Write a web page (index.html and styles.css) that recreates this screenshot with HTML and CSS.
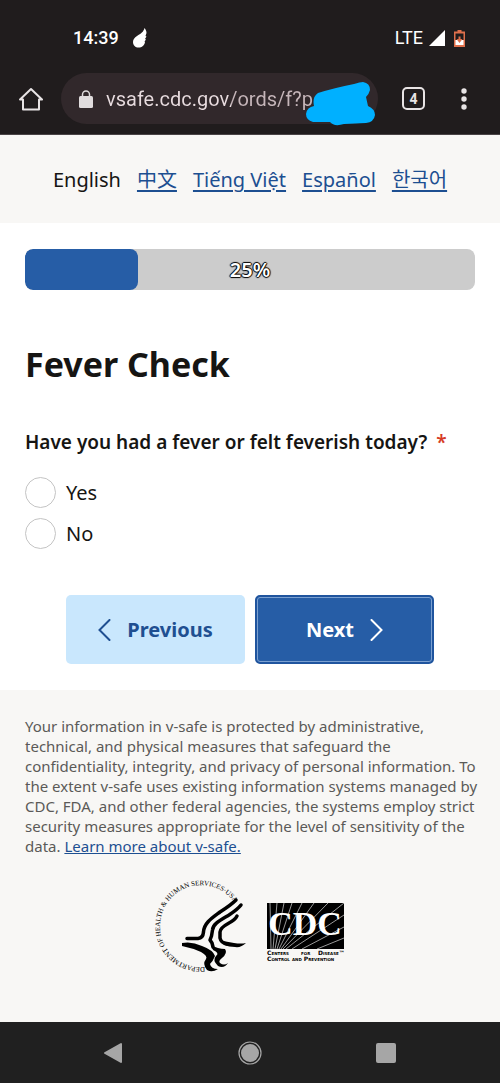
FILE: index.html
```html
<!DOCTYPE html>
<html lang="en">
<head>
<meta charset="UTF-8" />
<meta name="viewport" content="width=device-width, initial-scale=1" />
<title>Fever Check</title>
<link rel="stylesheet" href="styles.css">
</head>
<body>

<div class="status-bar">
  <span class="clock">14:39</span>
  <svg class="flame" width="14" height="20" viewBox="0 0 14 20" aria-hidden="true">
    <path fill="#fff" d="M11.500 0 C10.500 4 8 5.500 4 8 C1.500 9.500 0 11.500 0 14 C0 17.500 2.500 19.500 5.500 19.500 C9 19.500 11.500 17.500 12 14 L11.500 13.500 L13 11.500 L12 11 L13.500 8.500 L12.500 8 L13.500 5 C13.500 3 12.500 1 11.500 0 Z"/>
  </svg>
  <span class="network">LTE</span>
  <svg width="16" height="16" viewBox="0 0 16 16" aria-hidden="true"><path fill="#fff" d="M16 0 V16 H0 Z"/></svg>
  <svg class="battery" width="11" height="17" viewBox="0 0 11 17" aria-hidden="true">
    <path fill="#e0704c" d="M3.500 0 H7.500 V1.500 H11 V17 H0 V1.500 H3.500 Z"/>
    <path fill="#201c1d" d="M1.500 3.500 H9.500 V10 H1.500 Z"/>
    <path fill="#fff" d="M1.500 10 H9.500 V15 H1.500 Z"/>
    <path fill="#e0704c" d="M4.500 6.500 H6.500 V9 H8.500 L5.500 13 L2.500 9 H4.500 Z"/>
  </svg>
</div>

<div class="toolbar">
  <button class="icon-btn" aria-label="Home">
    <svg width="24" height="24" viewBox="0 0 24 24" fill="none" stroke="#e8e4e5" stroke-width="2" stroke-linejoin="round">
      <path d="M1 12.500 L12 2 L23 12.500 H20 V22.500 H4 V12.500 Z"/>
    </svg>
  </button>
  <div class="address">
    <svg width="14" height="18" viewBox="0 0 14 18" aria-hidden="true">
      <rect x="0" y="6" width="14" height="12" rx="1.500" fill="#e0dcdd"/>
      <path d="M3.500 7 V4.500 A3.500 3.500 0 0 1 10.500 4.500 V7" fill="none" stroke="#e0dcdd" stroke-width="1.500"/>
    </svg>
    <input type="text" aria-label="Address" value="vsafe.cdc.gov/ords/f?p" />
    <svg class="scribble" width="70" height="44" viewBox="0 0 70 44" aria-hidden="true">
      <path fill="#00b0ff" d="M12 11 Q28 6 48 2 Q54 0 57 0 Q64 1 64 8 Q63 12 60 15 L62 24 Q69 27 69 33 Q68 40 60 41 L38 42 Q28 45 24 40 L7 40 Q0 38 0 32 Q1 25 8 24 Q6 15 12 11 Z"/>
    </svg>
  </div>
  <button class="tabs" aria-label="4 open tabs">4</button>
  <button class="icon-btn" aria-label="More options">
    <svg width="6" height="22" viewBox="0 0 6 22" fill="#e8e4e5"><circle cx="3" cy="3" r="2.700"/><circle cx="3" cy="11" r="2.700"/><circle cx="3" cy="19" r="2.700"/></svg>
  </button>
</div>

<nav class="languages">
  <span>English</span>
  <a href="#" lang="zh">中文</a>
  <a href="#" lang="vi">Tiếng Việt</a>
  <a href="#" lang="es">Español</a>
  <a href="#" lang="ko">한국어</a>
</nav>

<main>
  <div class="progress" role="progressbar" aria-label="Survey progress" aria-valuenow="25" aria-valuemin="0" aria-valuemax="100">
    <div class="progress-fill" style="width: 25%"></div>
    <span class="progress-text">25%</span>
  </div>

  <h1>Fever Check</h1>

  <form>
    <fieldset>
      <legend>Have you had a fever or felt feverish today? <span class="required">*</span></legend>
      <div class="option">
        <input type="radio" name="fever" id="feverYes" />
        <label for="feverYes">Yes</label>
      </div>
      <div class="option">
        <input type="radio" name="fever" id="feverNo" />
        <label for="feverNo">No</label>
      </div>
    </fieldset>

    <div class="actions">
      <button type="button" class="btn btn-previous">
        <svg width="13" height="22" viewBox="0 0 13 22" fill="none" stroke="currentColor" stroke-width="2" stroke-linecap="round"><path d="M11.500 1 L1.500 11 L11.500 21"/></svg>
        Previous
      </button>
      <button type="button" class="btn btn-next">
        Next
        <svg width="13" height="22" viewBox="0 0 13 22" fill="none" stroke="currentColor" stroke-width="2" stroke-linecap="round"><path d="M1.500 1 L11.500 11 L1.500 21"/></svg>
      </button>
    </div>
  </form>
</main>

<footer>
  <p>Your information in v-safe is protected by administrative, technical, and physical measures that safeguard the confidentiality, integrity, and privacy of personal information. To the extent v-safe uses existing information systems managed by CDC, FDA, and other federal agencies, the systems employ strict security measures appropriate for the level of sensitivity of the data. <a href="#">Learn more about v-safe.</a></p>
  <div class="logos">
    <svg class="seal" width="92" height="96" viewBox="9 8 92 96" role="img" aria-label="Department of Health and Human Services">
      <path id="sealArc" fill="none" d="M60 97 A41 41 0 1 1 97 56"/>
      <text class="seal-text"><textPath href="#sealArc">DEPARTMENT OF HEALTH &amp; HUMAN SERVICES·USA</textPath></text>
      <g fill="none" stroke="#000" stroke-width="3.500" stroke-linecap="round" stroke-linejoin="round">
        <path d="M42 68.500 H53 Q58 68 58.500 62 C59 53 67 48 75 42 Q86 35 91 30"/>
        <path d="M96 35 Q93 39 84 45 C74 51 68 54 67.500 60 L66.500 66 L65 70 L67 73 L68 77"/>
        <path d="M92 46 Q90 50 84 53 Q75 58 75 62 V68 Q76 73 82 74"/>
      </g>
      <path d="M37 73 Q47 71 57 76 Q68 80 70 86 Q68 91 65 94 Q66 99 73 99 Q67 103 62 100 Q57 94 61 89 Q63 86 56 82 Q47 78 37 76 Z"/>
      <path d="M66 75 Q73 79 80 79 Q83 83 77 88 Q73 91 75 93 Q79 96 83 93 Q79 99 73 96 Q67 90 71 86 Q75 83 68 80 Z"/>
      <path d="M78 71 L89 73 Q96 74 101 73 Q96 78 90 77 Q84 77 79 75 Z"/>
    </svg>
    <svg class="cdc-logo" width="80" height="72" viewBox="0 -13 80 72" role="img" aria-label="Centers for Disease Control and Prevention">
      <rect width="77" height="46" fill="#000"/>
      <path fill="none" stroke="#fff" stroke-width="0.600" d="M4 46 L3 0 M6 46 L10 0 M8 46 L17 0 M10 46 L25 0 M12 46 L35 0 M14 46 L47 0 M16 46 L61 0 M19 46 L77 0 M25 46 L77 12 M35 46 L77 24 M50 46 L77 35"/>
      <text class="cdc-name" x="38" y="32" text-anchor="middle">CDC</text>
      <text class="cdc-caption" y="52"><tspan x="0">Centers</tspan> <tspan x="34">for</tspan> <tspan x="51">Disease™</tspan></text>
      <text class="cdc-caption" y="58">Control and Prevention</text>
    </svg>
  </div>
</footer>

<div class="system-nav">
  <button aria-label="Back"><svg width="20" height="22" viewBox="0 0 20 22"><path fill="#a6a6a6" stroke="#a6a6a6" stroke-width="2" stroke-linejoin="round" d="M17 2 V20 L1 11 Z"/></svg></button>
  <button aria-label="Home screen"><svg width="24" height="24" viewBox="0 0 24 24"><circle cx="12" cy="12" r="11" fill="none" stroke="#a6a6a6" stroke-width="1.200"/><circle cx="12" cy="12" r="9" fill="#a6a6a6"/></svg></button>
  <button aria-label="Recent apps"><svg width="20" height="20" viewBox="0 0 20 20"><rect width="20" height="20" rx="2" fill="#a6a6a6"/></svg></button>
</div>

</body>
</html>
```
FILE: styles.css
```css
* {
  box-sizing: border-box;
}
body {
  margin: 0;
  min-height: 100vh;
  display: flex;
  flex-direction: column;
  background: #fff;
  color: #161513;
  font-family: 'Noto Sans', 'Noto Sans CJK SC', 'Noto Sans CJK KR', sans-serif;
  font-size: 20px;
  line-height: 24px;
}
button, input {
  font: inherit;
  border: none;
  margin: 0;
  padding: 0;
}
button {
  cursor: pointer;
}
svg {
  display: block;
  flex: none;
}
a {
  color: #1d4f91;
}

/* phone status bar */
.status-bar {
  display: flex;
  align-items: center;
  padding: 28px 35px 24px 73px;
  background: #201c1d;
  color: #fff;
  font-family: Roboto, sans-serif;
  font-size: 18px;
  line-height: 20px;
}
.clock {
  font-weight: 500;
}
.flame {
  margin-left: 14px;
}
.network {
  margin-left: auto;
  margin-right: 6px;
}
.battery {
  margin-left: 9px;
}

/* browser toolbar */
.toolbar {
  display: flex;
  align-items: center;
  padding: 1px 33px 10px 19px;
  background: #201c1d;
  border-bottom: 1px solid #4a4446;
  font-family: Roboto, sans-serif;
}
.icon-btn {
  background: none;
}
.address {
  position: relative;
  flex: 1;
  min-width: 0;
  height: 51px;
  margin: 0 24px 0 18px;
  padding: 0 18px;
  display: flex;
  align-items: center;
  gap: 13px;
  border-radius: 26px;
  background: #31282b;
}
.address input {
  flex: 1;
  min-width: 0;
  outline: none;
  font-size: 20px;
  color: transparent;
  background: linear-gradient(90deg, #e8dcdf 125px, #c6b6ba 125px);
  -webkit-background-clip: text;
  background-clip: text;
}
.scribble {
  position: absolute;
  right: 2px;
  bottom: -2px;
}
.tabs {
  width: 23px;
  height: 23px;
  margin-right: 36px;
  border: 2px solid #e8e4e5;
  border-radius: 5px;
  background: none;
  color: #e8e4e5;
  font-size: 14px;
  font-weight: 700;
  line-height: 18px;
}

.languages {
  display: flex;
  flex-wrap: wrap;
  justify-content: center;
  gap: 16px;
  padding: 33px 24px 31px;
  background: #f8f7f5;
}
.languages a {
  text-underline-offset: 3px;
}

main {
  padding: 26px 25px;
}
.progress {
  display: grid;
  height: 41px;
  border-radius: 8px;
  background: #ccc;
  overflow: hidden;
}
.progress-fill, .progress-text {
  grid-area: 1 / 1;
}
.progress-fill {
  border-radius: 8px;
  background: #265da6;
}
.progress-text {
  place-self: center;
  color: #fff;
  font-weight: 600;
  text-shadow: 1px 0 1px #000, -1px 0 1px #000, 0 1px 1px #000, 0 -1px 1px #000;
}
h1 {
  margin: 52px 0 44px;
  font-size: 34px;
  line-height: 44px;
  font-weight: 700;
}
fieldset {
  margin: 0;
  padding: 0;
  border: none;
}
legend {
  padding: 0;
  margin-bottom: 23px;
  font-size: 19px;
  font-weight: 600;
}
.required {
  margin-left: 4px;
  color: #d63b25;
}
.option {
  display: flex;
  align-items: center;
  gap: 10px;
  margin-bottom: 10px;
}
.option input {
  appearance: none;
  width: 31px;
  height: 31px;
  border: 1px solid #c4c4c4;
  border-radius: 50%;
  background: #fff;
}
.option input:checked {
  border: 9px solid #265da6;
}
.actions {
  display: flex;
  justify-content: center;
  gap: 10px;
  margin-top: 36px;
}
.btn {
  flex: 0 1 179px;
  height: 69px;
  display: flex;
  align-items: center;
  justify-content: center;
  gap: 16px;
  border-radius: 5px;
  font-weight: 700;
}
.btn-previous {
  background: #c9e7fd;
  color: #1f4f91;
}
.btn-next {
  background: #265da6;
  color: #fff;
  border: 2px solid #1f549e;
  box-shadow: inset 0 0 0 1px #7ba0d0;
}

footer {
  flex: 1;
  padding: 26px 16px 26px 25px;
  background: #f8f7f5;
  color: #5b5a58;
  font-size: 15px;
  line-height: 20px;
}
footer p {
  margin: 0;
}
.logos {
  display: flex;
  justify-content: center;
  align-items: center;
  gap: 21px;
  margin: 22px 9px 0 0;
}
.seal, .cdc-logo {
  overflow: visible;
}
.seal-text {
  font-family: 'Liberation Serif', serif;
  font-size: 7px;
}
.cdc-name {
  fill: #fff;
  font-family: 'Liberation Serif', serif;
  font-size: 34px;
  font-weight: 700;
}
.cdc-caption {
  font-family: 'DejaVu Sans', sans-serif;
  font-size: 6px;
  font-weight: 700;
  font-variant: small-caps;
}

.system-nav {
  display: flex;
  justify-content: space-between;
  align-items: center;
  height: 61px;
  padding: 0 104px;
  background: #202020;
}
.system-nav button {
  background: none;
}
```
